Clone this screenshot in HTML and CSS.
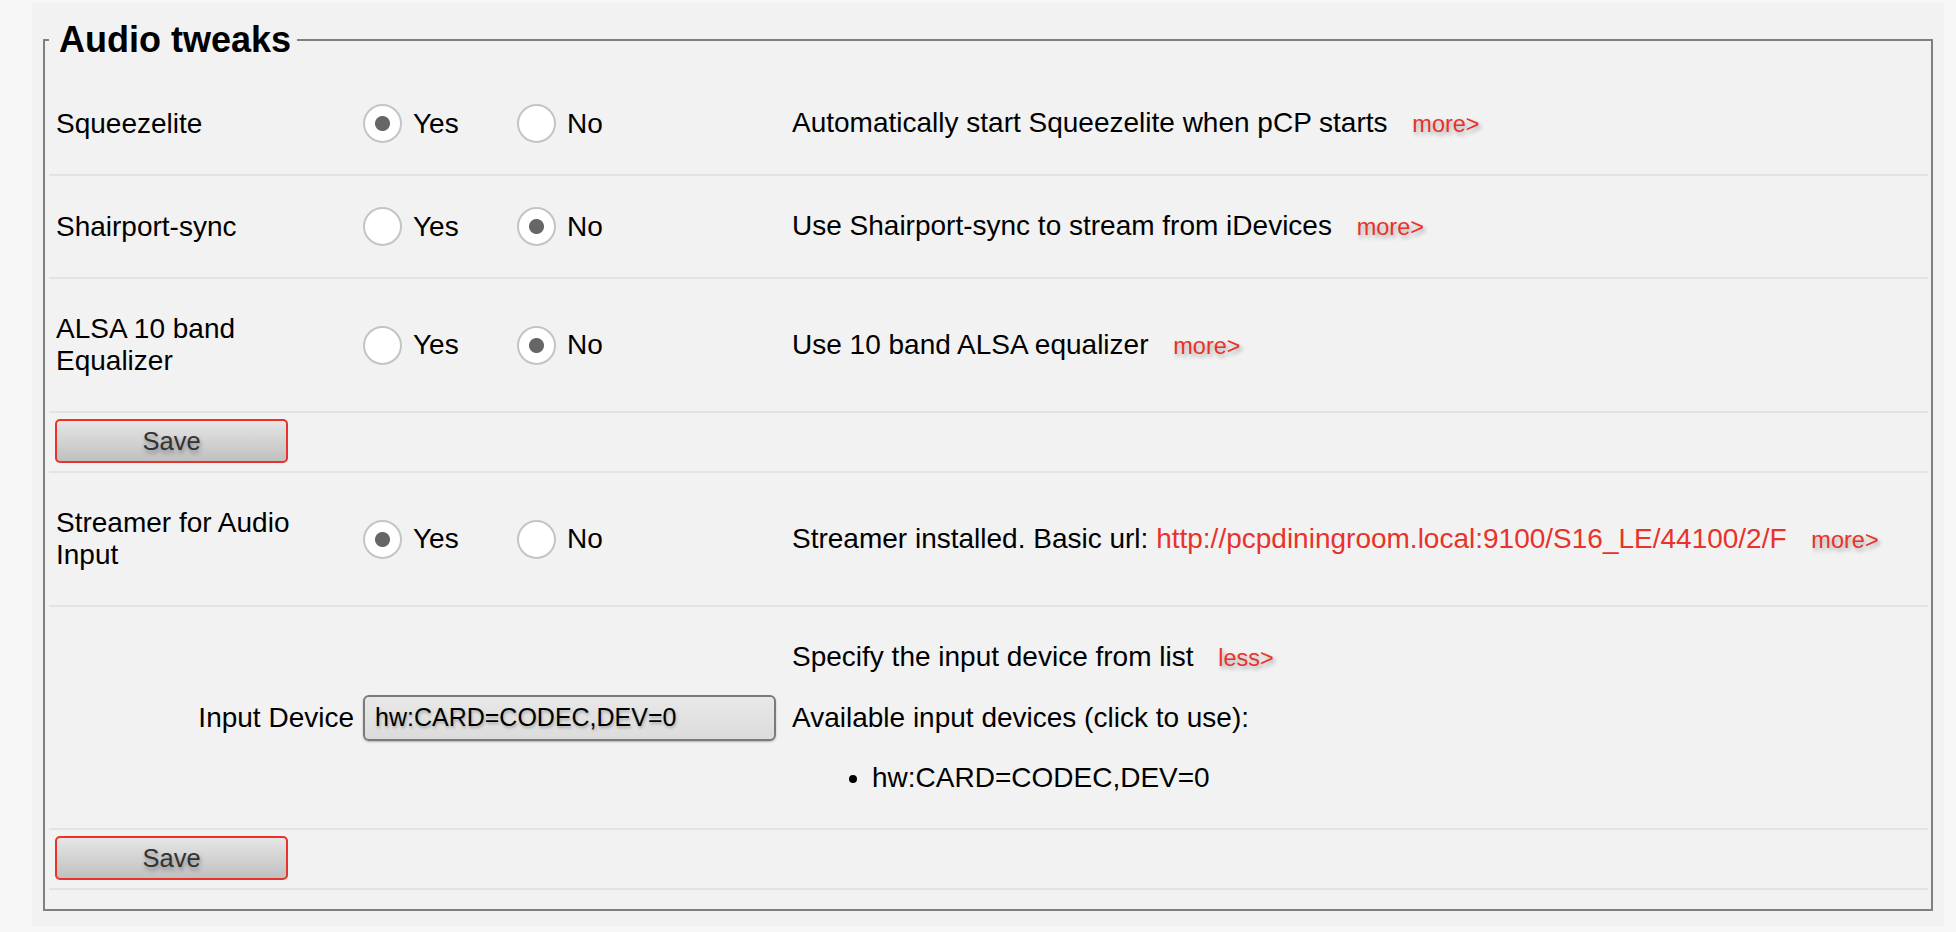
FILE: index.html
```html
<!DOCTYPE html>
<html lang="en">
<head>
<meta charset="utf-8">
<title>Audio tweaks</title>
<link rel="stylesheet" href="styles.css">
</head>
<body>
<div class="page">
  <fieldset class="panel">
    <legend>Audio tweaks</legend>

    <div class="row">
      <div class="label">Squeezelite</div>
      <div class="options">
        <label class="opt"><input type="radio" name="sq" checked>Yes</label>
        <label class="opt"><input type="radio" name="sq">No</label>
      </div>
      <div class="desc">Automatically start Squeezelite when pCP starts <a class="more" href="#">more&gt;</a></div>
    </div>

    <div class="row">
      <div class="label">Shairport-sync</div>
      <div class="options">
        <label class="opt"><input type="radio" name="sh">Yes</label>
        <label class="opt"><input type="radio" name="sh" checked>No</label>
      </div>
      <div class="desc">Use Shairport-sync to stream from iDevices <a class="more" href="#">more&gt;</a></div>
    </div>

    <div class="row">
      <div class="label">ALSA 10 band Equalizer</div>
      <div class="options">
        <label class="opt"><input type="radio" name="eq">Yes</label>
        <label class="opt"><input type="radio" name="eq" checked>No</label>
      </div>
      <div class="desc">Use 10 band ALSA equalizer <a class="more" href="#">more&gt;</a></div>
    </div>

    <div class="save-row">
      <button class="btn" type="button">Save</button>
    </div>

    <div class="row">
      <div class="label">Streamer for Audio Input</div>
      <div class="options">
        <label class="opt"><input type="radio" name="st" checked>Yes</label>
        <label class="opt"><input type="radio" name="st">No</label>
      </div>
      <div class="desc">Streamer installed. Basic url: <a class="url" href="#">http://pcpdiningroom.local:9100/S16_LE/44100/2/F</a> <a class="more" href="#">more&gt;</a></div>
    </div>

    <div class="row">
      <div class="label right">Input Device</div>
      <div class="options">
        <input class="field" type="text" value="hw:CARD=CODEC,DEV=0">
      </div>
      <div class="desc">
        <p>Specify the input device from list <a class="more" href="#">less&gt;</a></p>
        <p>Available input devices (click to use):</p>
        <ul>
          <li>hw:CARD=CODEC,DEV=0</li>
        </ul>
      </div>
    </div>

    <div class="save-row">
      <button class="btn" type="button">Save</button>
    </div>
  </fieldset>
</div>
</body>
</html>
```
FILE: styles.css
```css
html, body {
  margin: 0;
  padding: 0;
}

body {
  background: #f7f7f7;
  font-family: "Liberation Sans", Arial, sans-serif;
  font-size: 28px;
  color: #000;
}

.page {
  margin: 3px 12px 5px 32px;
  background: #f2f2f2;
  padding: 16px 11px 15px;
}

.panel {
  margin: 0;
  border: 2px solid #808080;
  padding: 13px 3px 19px 4px;
  min-width: 0;
}

.panel legend {
  font-size: 36px;
  font-weight: bold;
  line-height: 41px;
  padding: 0 6px 0 10px;
}

.row {
  display: grid;
  grid-template-columns: 314px 422px 1fr;
  align-items: center;
  padding: 34px 0;
  line-height: 32px;
  border-bottom: 2px solid #e3e3e3;
}

.label {
  padding: 0 9px 0 7px;
}

.label.right {
  text-align: right;
}

.options {
  display: flex;
  align-items: center;
}

.opt {
  display: inline-flex;
  align-items: center;
  gap: 11px;
  width: 154px;
}

.opt input {
  appearance: none;
  -webkit-appearance: none;
  box-sizing: border-box;
  width: 39px;
  height: 39px;
  margin: -3.5px 0;
  border: 2px solid #c4c4c4;
  border-radius: 50%;
  background: #fff;
}

.opt input:checked {
  background: radial-gradient(circle, #666 0, #666 7px, #fff 8px);
}

.desc {
  padding-left: 7px;
}

.desc p {
  margin: 0 0 28px;
}

.desc ul {
  margin: 0;
  padding-left: 80px;
}

.more {
  color: #e8332a;
  font-size: 23.5px;
  text-decoration: none;
  margin-left: 17px;
  text-shadow: 2px 3px 4px rgba(0, 0, 0, 0.3);
}

.url {
  color: #e8332a;
  text-decoration: none;
}

.save-row {
  padding: 6px 0 8px 6px;
  border-bottom: 2px solid #e3e3e3;
  line-height: 0;
}

.btn {
  box-sizing: border-box;
  width: 233px;
  height: 44px;
  border: 2px solid #e8332a;
  border-radius: 5px;
  background: linear-gradient(#e6e6e6, #c0c0c0);
  font-family: "Liberation Sans", Arial, sans-serif;
  font-size: 25.5px;
  color: #333;
  text-shadow: 1px 3px 4px rgba(0, 0, 0, 0.35);
  padding: 0;
}

.field {
  box-sizing: border-box;
  width: 413px;
  height: 46px;
  border: 2px solid #7a7a7a;
  border-radius: 6px;
  background: linear-gradient(#e8e8e8, #dcdcdc);
  box-shadow: 0 1px 2px rgba(0, 0, 0, 0.25);
  font-family: "Liberation Sans", Arial, sans-serif;
  font-size: 25px;
  color: #000;
  padding: 0 10px;
  text-shadow: 1px 2px 3px rgba(0, 0, 0, 0.25);
  margin: -7px 0;
}
```
